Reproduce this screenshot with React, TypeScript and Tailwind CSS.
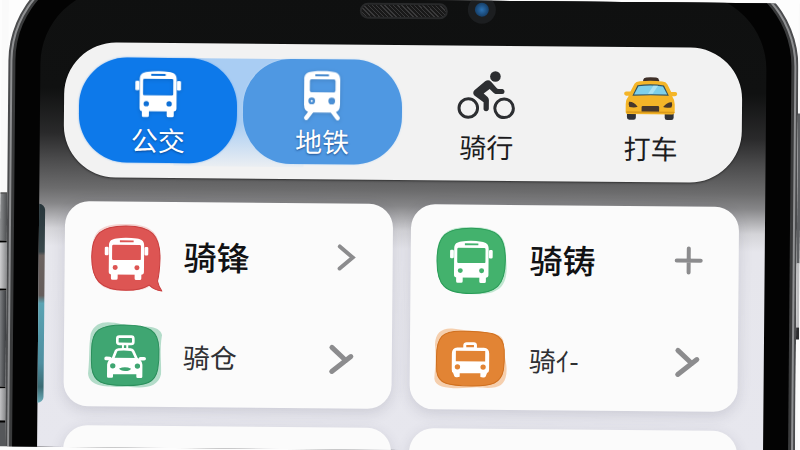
import type { ReactNode } from "react";
import { clsx } from "clsx";

function BusShape() {
  return (
    <g fill="currentColor">
      <path
        fillRule="evenodd"
        d="M13 26C13 10 22 5 36 3C56 0 80 0 100 3C114 5 123 10 123 26V112Q123 121 114 121H22Q13 121 13 112ZM23 28V69Q23 73 27 73H109Q113 73 113 69V28Q113 24 109 24H27Q23 24 23 28ZM47 9V15H90V9ZM33 90A8 8 0 1 0 33 106A8 8 0 1 0 33 90ZM101 90A8 8 0 1 0 101 106A8 8 0 1 0 101 90Z"
      />
      <rect x="0" y="30" width="12" height="28" rx="4" />
      <rect x="124" y="30" width="12" height="28" rx="4" />
      <path d="M20 118H41V133Q41 138 36 138H25Q20 138 20 133ZM94 118H115V133Q115 138 110 138H99Q94 138 94 133Z" />
    </g>
  );
}

function BusIcon() {
  return (
    <svg viewBox="0 0 136 140" className="h-[47px] w-[46px] drop-shadow-sm" aria-hidden="true">
      <BusShape />
    </svg>
  );
}

function TrainIcon() {
  return (
    <svg viewBox="0 0 114 150" className="h-[50px] w-[38px] drop-shadow-sm" aria-hidden="true">
      <path
        fill="currentColor"
        fillRule="evenodd"
        d="M3 28C3 8 14 2 57 2C100 2 111 8 111 28V103Q111 127 90 127H24Q3 127 3 103ZM20 32V61Q20 66 25 66H92Q97 66 97 61V32Q97 27 92 27H25Q20 27 20 32ZM36 12V18H77V12ZM26 82A10 10 0 1 0 26 102A10 10 0 1 0 26 82ZM86 82A10 10 0 1 0 86 102A10 10 0 1 0 86 82Z"
      />
      <circle cx="26" cy="92" r="3" fill="currentColor" />
      <path d="M26 122L10 143M88 122L104 143" stroke="currentColor" strokeWidth="13" strokeLinecap="round" />
    </svg>
  );
}

function CyclistIcon() {
  return (
    <svg viewBox="0 0 178 152" className="h-[51px] w-[59px]" fill="none" aria-hidden="true">
      <g stroke="#2c2e31" strokeWidth="9">
        <circle cx="34" cy="115" r="28" />
        <circle cx="142" cy="115" r="28" />
      </g>
      <circle cx="115" cy="19" r="16" fill="#2c2e31" />
      <path
        d="M84 34Q94 27 102 35L119 54Q121 57 125 57H137Q143 59 143 65Q143 72 136 72H116Q111 71 108 67L98 57L80 71L92 81Q96 85 96 90V118Q94 124 88 124Q80 124 80 117V97L52 77Q45 69 52 61Z"
        fill="#2c2e31"
      />
    </svg>
  );
}

function TaxiIcon() {
  return (
    <svg viewBox="0 0 166 134" className="h-[45px] w-[55px]" aria-hidden="true">
      <path d="M12 106H39V124Q39 131 32 131H19Q12 131 12 124ZM126 106H153V124Q153 131 146 131H133Q126 131 126 124Z" fill="#303238" />
      <path d="M60 16V11Q61 4 69 3Q84 2 99 3Q107 4 108 11V16Z" fill="#3f3029" />
      <path
        d="M34 22Q38 16 50 15Q84 10 118 15Q129 16 133 23L145 46H158Q164 47 163 53Q162 59 156 59H148Q156 70 156 84V106Q156 114 148 114H16Q8 114 8 106V84Q8 70 17 59H9Q3 58 3 52Q3 46 9 46H22Z"
        fill="#f4b528"
      />
      <path d="M43 27Q84 20 123 27L138 58Q84 55 28 59Z" fill="#34535f" />
      <path d="M46 30Q84 24 120 30L133 54Q84 52 33 55Z" fill="#7fd0ea" />
      <path d="M91 28L75 52H89L105 28Z" fill="#a9e2f3" />
      <path d="M18 77Q32 76 44 92Q36 96 19 93Q15 85 18 77ZM147 77Q133 76 121 92Q129 96 146 93Q150 85 147 77Z" fill="#47382c" />
      <path d="M56 92Q56 89 60 89H105Q109 89 109 92V109H56Z" fill="#47382c" />
      <path d="M12 108H153" stroke="#d99a1c" strokeWidth="5" strokeLinecap="round" />
    </svg>
  );
}

function Badge({ children }: { children: ReactNode }) {
  return (
    <svg viewBox="0 0 222 204" className="h-[68px] w-[74px] shrink-0 text-white" aria-hidden="true">
      {children}
    </svg>
  );
}

function RedBusBadge() {
  return (
    <Badge>
      <path d="M10 90C8 18 40 1 110 1C182 1 216 20 214 100C214 180 190 202 112 202C32 202 12 180 10 90Z" fill="#f4d5d3" />
      <path
        d="M9 100C9 32 36 7 112 7C188 7 214 34 214 104C213 142 210 160 207 172Q211 190 220 201Q198 199 182 184C162 197 142 200 112 200C34 200 9 168 9 100Z"
        fill="#dd5553"
        stroke="#c93f3f"
        strokeWidth="3"
      />
      <g transform="translate(48 42) scale(0.96 0.92)">
        <BusShape />
      </g>
    </Badge>
  );
}

function GreenBusBadge() {
  return (
    <Badge>
      <path d="M6 88C8 16 44 0 112 1C190 2 216 28 214 92C224 176 200 204 116 203C30 200 6 172 6 88Z" fill="#bfe6cf" />
      <path
        d="M7 102C7 26 34 5 110 5C188 5 212 28 212 100C212 176 186 200 110 201C32 201 7 178 7 102Z"
        fill="#43b26d"
        stroke="#2a9c58"
        strokeWidth="3"
      />
      <g transform="translate(46 42) scale(0.94 0.92)">
        <BusShape />
      </g>
    </Badge>
  );
}

function GreenTaxiBadge() {
  return (
    <Badge>
      <path d="M8 40C22 2 56 0 104 12C160 20 214 10 222 42C214 90 222 130 220 160C212 200 170 204 120 198C60 202 4 200 1 160C6 110 2 80 8 40Z" fill="#b3dcc9" />
      <path
        d="M11 90C11 28 34 14 108 13C184 13 211 28 213 84C214 110 213 126 210 144C203 186 176 195 112 195C44 195 18 186 12 142Q10 120 11 90Z"
        fill="#3fa672"
        stroke="#2b8f5c"
        strokeWidth="3"
      />
      <g fill="none" stroke="currentColor" strokeWidth="8" strokeLinejoin="round">
        <rect x="88" y="48" width="48" height="22" rx="6" />
        <path d="M105 70V86M118 70V86" strokeWidth="6" />
        <path d="M74 118L84 92Q86 88 92 87Q109 85 128 87Q134 88 136 92L148 118" />
      </g>
      <path
        fill="currentColor"
        fillRule="evenodd"
        d="M72 112H150Q162 118 164 132V168Q164 172 160 172H150Q146 172 146 168V161H76V168Q76 172 72 172H62Q58 172 58 168V132Q60 118 72 112ZM75 128A8 8 0 1 0 75 144A8 8 0 1 0 75 128ZM149 128A8 8 0 1 0 149 144A8 8 0 1 0 149 128ZM94 144Q112 136 130 144Q126 151 112 151Q98 151 94 144Z"
      />
      <path d="M55 114H66M158 114H169" stroke="currentColor" strokeWidth="11" strokeLinecap="round" />
    </Badge>
  );
}

function OrangeTaxiBadge() {
  return (
    <Badge>
      <path d="M3 64C4 26 26 12 60 16C120 26 200 18 208 50C210 108 222 118 218 150C212 190 190 196 130 191C80 194 6 202 2 166C4 128 8 104 3 64Z" fill="#f5cfae" />
      <path
        d="M8 100C8 40 26 23 80 23C180 23 208 28 211 78C212 100 212 116 209 138C202 178 176 187 112 187C44 187 14 182 9 144Q8 120 8 100Z"
        fill="#e28434"
        stroke="#d0701f"
        strokeWidth="3"
      />
      <path
        transform="translate(0 10)"
        fill="currentColor"
        fillRule="evenodd"
        d="M88 62V54Q89 46 98 46H120Q128 46 129 54V62H150Q166 63 166 80V128Q166 136 160 138L156 148Q154 152 148 151L140 150V139H78V150L70 151Q64 152 62 148L58 138Q54 136 54 128V80Q54 63 70 62ZM97 54V61H120V54ZM66 72V103H154V72ZM71 112A8 8 0 1 0 71 128A8 8 0 1 0 71 112ZM148 112A8 8 0 1 0 148 128A8 8 0 1 0 148 112Z"
      />
    </Badge>
  );
}

const TABS = [
  { label: "公交", icon: <BusIcon />, tone: "gap-1 pt-2.5 bg-[#0d79ea] text-white shadow-[0_0_2px_#6aa9ee]" },
  { label: "地铁", icon: <TrainIcon />, tone: "gap-1 pt-2.5 bg-[#4f98e2] text-white shadow-[0_0_2px_#bcd9f6]" },
  { label: "骑行", icon: <CyclistIcon />, tone: "gap-2.5 pt-2 text-[#1c1c1e]" },
  { label: "打车", icon: <TaxiIcon />, tone: "gap-2 pt-2.5 text-[#1c1c1e]" },
];

function ModeTabs() {
  return (
    <nav
      className="relative -mx-0.5 grid grid-cols-4 gap-1.5 rounded-[52px] bg-[#f2f2f2] p-[15px] pr-3 shadow-[0_1px_2px_rgba(0,0,0,0.5)]"
      aria-label="出行方式"
    >
      <span className="absolute top-[15px] left-[110px] h-[108px] w-[130px] bg-linear-to-b from-[#a9cdf3] from-60% to-[#a9cdf3]/10" />
      {TABS.map((tab, i) => (
        <button
          key={tab.label}
          type="button"
          aria-pressed={i === 0}
          className={clsx("relative flex h-[105px] flex-col items-center rounded-[48px]", tab.tone)}
        >
          <span className="flex h-[52px] items-center">{tab.icon}</span>
          <span className={clsx("text-[27px] leading-8", i < 2 && "[text-shadow:0_1px_2px_rgba(10,50,110,0.7)]")}>
            {tab.label}
          </span>
        </button>
      ))}
    </nav>
  );
}

type Mark = "chevron" | "tailed" | "plus";

const MARKS: Record<Mark, string> = {
  chevron: "M11 3L24 14L11 25",
  tailed: "M4 3L18 16M4 27L23 12",
  plus: "M14 2V26M2 14H26",
};

function CardRow({ badge, label, mark, strong }: { badge: ReactNode; label: string; mark: Mark; strong?: boolean }) {
  return (
    <div className="flex items-center">
      {badge}
      <div className={clsx("flex flex-1 items-center justify-between pl-[21px]", strong ? "pb-1" : "pt-1")}>
        <span
          className={clsx(
            "whitespace-nowrap leading-10",
            strong ? "text-[33px] font-medium text-[#111113]" : "text-[27px] text-[#2f3033]",
          )}
        >
          {label}
        </span>
        <button type="button" aria-label={mark === "plus" ? "添加" : "查看"}>
          <svg
            viewBox="0 0 28 28"
            className="size-7 overflow-visible"
            fill="none"
            stroke="#8c8c8e"
            strokeWidth={mark === "tailed" ? 5 : 4}
            strokeLinecap="round"
          >
            <path d={MARKS[mark]} />
          </svg>
        </button>
      </div>
    </div>
  );
}

function Card({ children }: { children?: ReactNode }) {
  return (
    <section className="flex min-h-[205px] flex-col gap-[29px] rounded-[24px] bg-[#fbfbfb] pt-[22px] pr-9 pl-6 shadow-[0_4px_14px_rgba(60,60,90,0.16)]">
      {children}
    </section>
  );
}

function SideKeys() {
  return (
    <div className="flex w-[7px] shrink-0 flex-col bg-[#fafafa] pt-[196px]">
      <span className="h-12 border-t border-black bg-linear-to-r from-[#8e9092] to-[#4c4e50]" />
      <span className="h-12 border-t-2 border-black bg-linear-to-r from-[#d2d2d4] to-[#8b8c8e]" />
      <span className="h-[100px] border-y-2 border-black bg-linear-to-r from-[#85878a] to-[#3b3d40]" />
      <span className="h-8 bg-linear-to-r from-[#d2d2d4] to-[#8b8c8e]" />
      <span className="flex-1 border-t-2 border-black bg-[#55575a]" />
    </div>
  );
}

export default function App() {
  return (
    <div className="h-screen overflow-hidden bg-[#fdfdfd] font-['Noto_Sans_CJK_SC',sans-serif]">
      <div className="flex h-full rotate-[0.5deg] overflow-hidden">
        <SideKeys />
        {/* metal edge, black bezel, screen */}
        <div className="-mt-9 min-w-0 flex-1 rounded-t-[100px] bg-linear-to-r from-[#4a4b4d] via-[#77797b] to-[#4a4b4d] px-0.5 pt-0.5">
          <div className="h-full rounded-t-[98px] bg-[#8f9092] px-0.5 pt-0.5">
            <div className="h-full rounded-t-[96px] bg-[#3a3b3c] px-[3px] pt-[3px]">
              <div className="h-full rounded-t-[92px] bg-[#030303] px-[25px] pt-5">
                <main className="relative h-full rounded-t-[76px] bg-[linear-gradient(to_bottom,#0f1010_0,#101111_100px,#2a2a2b_145px,#4c4c4d_172px,#6c6c6d_200px,#868688_215px,#d4d4d8_240px,#e6e6ec_258px,#e7e7ee_100%)] px-[26px]">
                  <header className="grid grid-cols-[1fr_auto_1fr] items-center gap-5 pt-1 pb-[22px]">
                    <span />
                    <span className="mt-1 h-4 w-[88px] rounded-full border-2 border-[#28292a] bg-[repeating-linear-gradient(45deg,#3a3a3b_0,#3a3a3b_1px,#191919_1px,#191919_3px)]" />
                    <span className="flex size-7 items-center justify-center rounded-full bg-[#1c1e20]">
                      <span className="size-3.5 rounded-full bg-radial from-[#2c72b4] to-[#0d2b4b]" />
                    </span>
                  </header>
                  <ModeTabs />
                  <div className="mt-6 grid grid-cols-2 gap-x-[18px] gap-y-[19px]">
                    <Card>
                      <CardRow badge={<RedBusBadge />} label="骑锋" mark="chevron" strong />
                      <CardRow badge={<GreenTaxiBadge />} label="骑仓" mark="tailed" />
                    </Card>
                    <Card>
                      <CardRow badge={<GreenBusBadge />} label="骑铸" mark="plus" strong />
                      <CardRow badge={<OrangeTaxiBadge />} label="骑ｲ-" mark="tailed" />
                    </Card>
                    <Card />
                    <Card />
                  </div>
                  {/* edge of the neighbouring photo */}
                  <span className="absolute top-[216px] left-0 h-[199px] w-1.5 rounded-r-md bg-[linear-gradient(to_bottom,#26353a_0,#39474b_24%,#6b625f_26%,#655d5b_46%,#5aa3b3_50%,#4f8fa0_80%,#3a6a72_92%,#6fb0bd_100%)]" />
                </main>
              </div>
            </div>
          </div>
        </div>
        <div className="w-[3px] shrink-0 bg-[#fafafa] pt-[110px]">
          <span className="block h-[150px] bg-[#5d5f62]" />
          <span className="block h-16 bg-[#bdbec0]" />
          <span className="block h-3 bg-[#2c2d2f]" />
        </div>
      </div>
    </div>
  );
}
